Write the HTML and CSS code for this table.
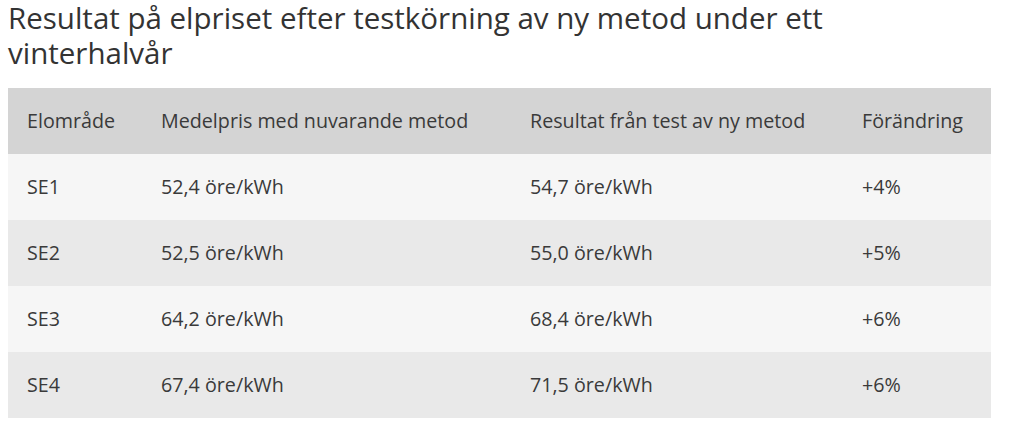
FILE: index.html
```html
<!DOCTYPE html>
<html lang="sv">
<head>
    <meta charset="UTF-8">
    <meta name="viewport" content="width=device-width, initial-scale=1.0">
    <title>Resultat på elpriset</title>
    <link rel="stylesheet" href="styles.css">
</head>
<body>
    <div class="article">
        <h2 class="title">Resultat på elpriset efter testkörning av ny metod under ett vinterhalvår</h2>

        <table class="price-table">
            <colgroup>
                <col class="col-area">
                <col class="col-current">
                <col class="col-test">
                <col class="col-change">
            </colgroup>
            <thead>
                <tr>
                    <th>Elområde</th>
                    <th>Medelpris med nuvarande metod</th>
                    <th>Resultat från test av ny metod</th>
                    <th>Förändring</th>
                </tr>
            </thead>
            <tbody>
                <tr>
                    <td>SE1</td>
                    <td>52,4 öre/kWh</td>
                    <td>54,7 öre/kWh</td>
                    <td>+4%</td>
                </tr>
                <tr>
                    <td>SE2</td>
                    <td>52,5 öre/kWh</td>
                    <td>55,0 öre/kWh</td>
                    <td>+5%</td>
                </tr>
                <tr>
                    <td>SE3</td>
                    <td>64,2 öre/kWh</td>
                    <td>68,4 öre/kWh</td>
                    <td>+6%</td>
                </tr>
                <tr>
                    <td>SE4</td>
                    <td>67,4 öre/kWh</td>
                    <td>71,5 öre/kWh</td>
                    <td>+6%</td>
                </tr>
            </tbody>
        </table>
    </div>
</body>
</html>
```

FILE: styles.css
```css
* {
    margin: 0;
    padding: 0;
    box-sizing: border-box;
}

body {
    font-family: 'Open Sans', 'Liberation Sans', sans-serif;
    background: white;
    color: #333;
    padding: 0 8px;
}

.article {
    width: 983px;
}

.title {
    max-width: 880px;
    font-size: 29.5px;
    font-weight: normal;
    line-height: 35px;
    color: #333;
    margin-bottom: 18px;
}

.price-table {
    width: 983px;
    border-collapse: collapse;
    table-layout: fixed;
    font-size: 19.7px;
    line-height: 28px;
}

.col-area { width: 134px; }
.col-current { width: 369px; }
.col-test { width: 332px; }
.col-change { width: 148px; }

.price-table th,
.price-table td {
    padding: 19px 19px;
    text-align: left;
    font-weight: normal;
    white-space: nowrap;
    color: #3a3a3a;
}

.price-table thead tr {
    background: #d4d4d4;
}

.price-table tbody tr:nth-child(odd) {
    background: #f6f6f6;
}

.price-table tbody tr:nth-child(even) {
    background: #e9e9e9;
}
```
